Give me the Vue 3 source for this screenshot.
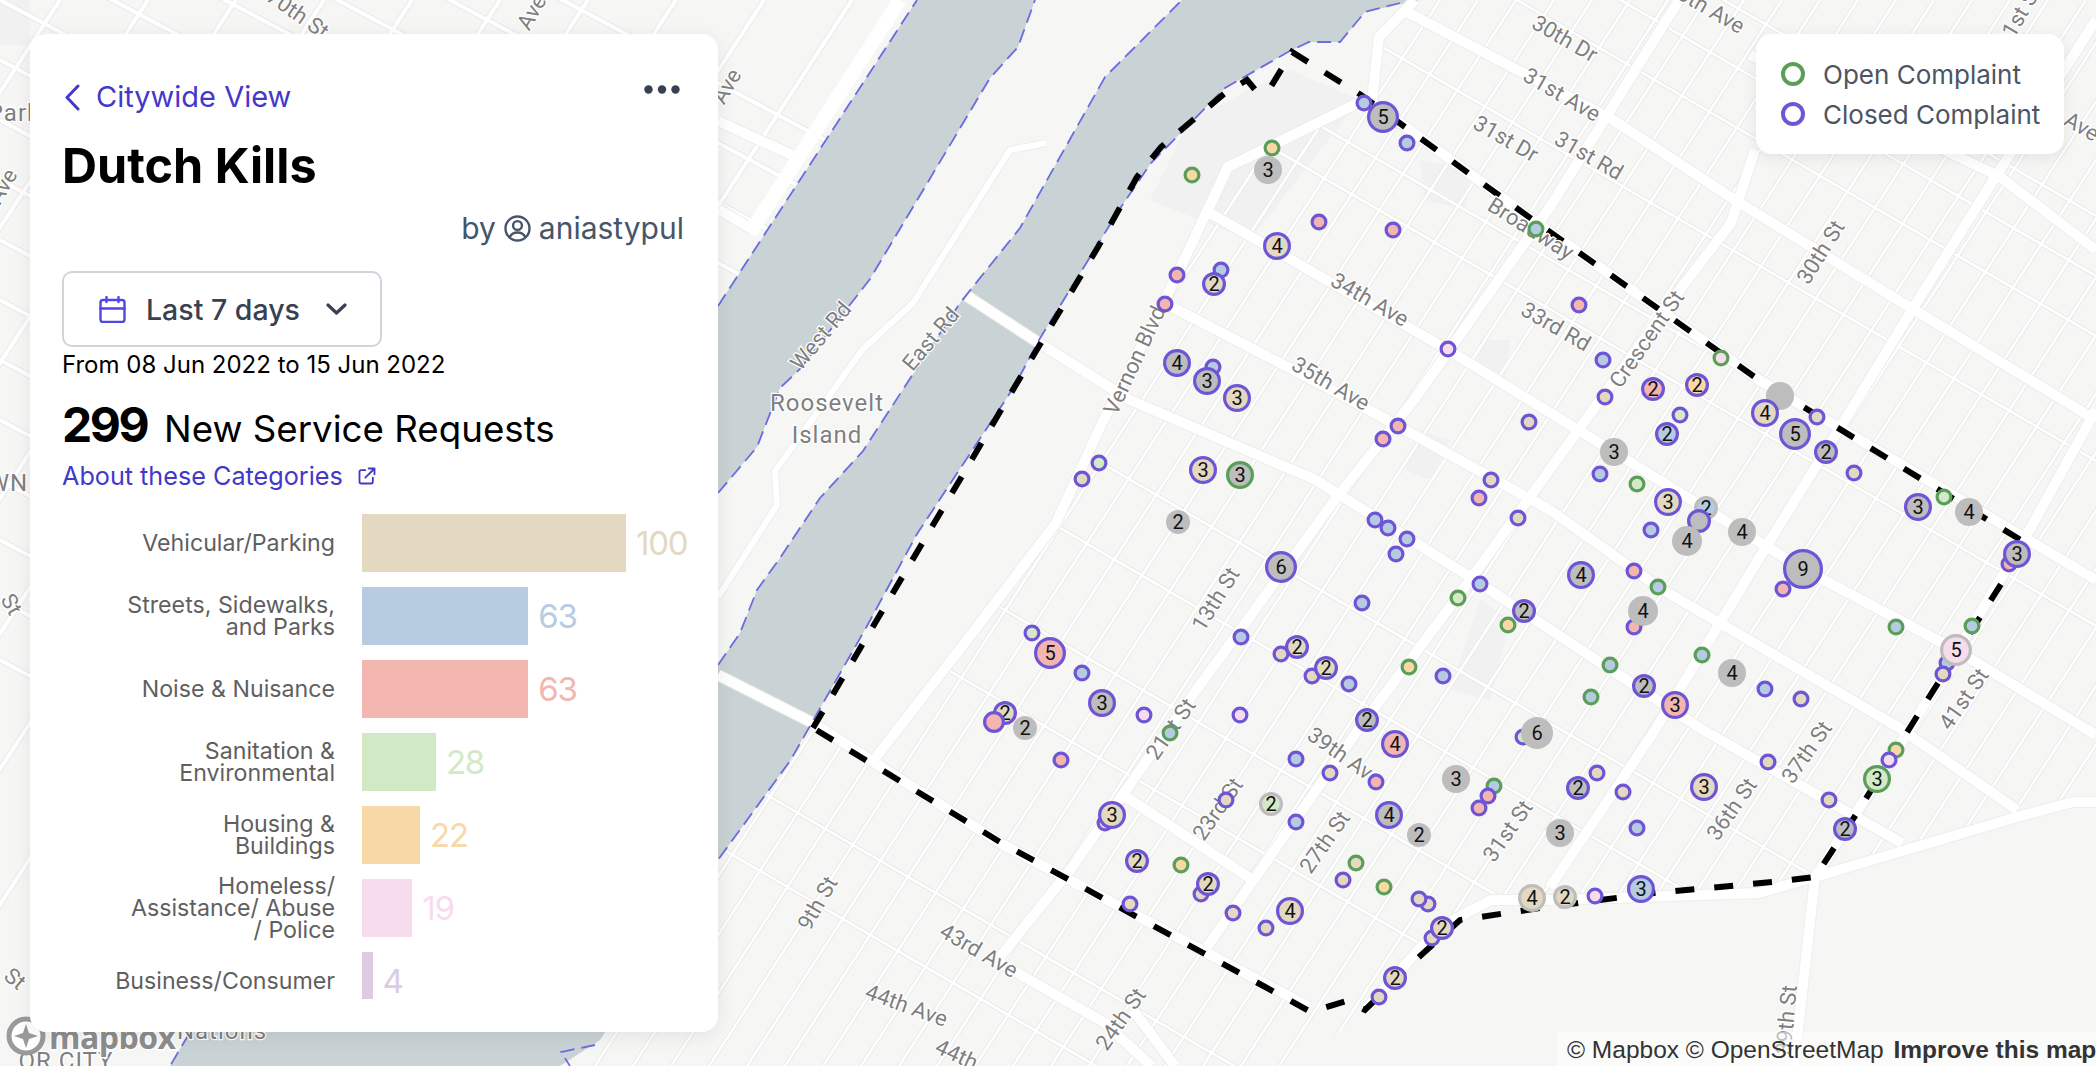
<script setup>
const FILL = { t: '#e3d9c1', b: '#b5cbe1', r: '#f3b5b0', g: '#d3e9c7', o: '#f9d7a7', p: '#f6dced', k: '#bdbdbd' };
const RING = { P: '#6e55d6', G: '#5b9e59', K: '#bdbdbd' };

const bars = [
  { label: 'Vehicular/Parking', value: 100, color: '#e3d9c1' },
  { label: 'Streets, Sidewalks,\nand Parks', value: 63, color: '#b7cce0' },
  { label: 'Noise & Nuisance', value: 63, color: '#f3b6b1' },
  { label: 'Sanitation &\nEnvironmental', value: 28, color: '#d2e9c6' },
  { label: 'Housing &\nBuildings', value: 22, color: '#f9d8a8' },
  { label: 'Homeless/\nAssistance/ Abuse\n/ Police', value: 19, color: '#f6dcec' },
  { label: 'Business/Consumer', value: 4, color: '#dcccE2' },
];

// x, y, outer radius, fill, ring, count
const markers = [
  [1364, 103, 8.5, 'b', 'P'], [1383, 117, 16, 'k', 'P', 5], [1407, 143, 8.5, 'b', 'P'], [1272, 148, 8.5, 'o', 'G'],
  [1268, 170, 14, 'k', '', 3], [1192, 175, 8.5, 'o', 'G'], [1319, 222, 8.5, 'r', 'P'], [1393, 230, 8.5, 'r', 'P'],
  [1277, 246, 14, 't', 'P', 4], [1536, 229, 8.5, 'b', 'G'], [1177, 275, 8.5, 'r', 'P'], [1221, 270, 8.5, 'b', 'P'],
  [1214, 284, 12, 't', 'P', 2], [1165, 304, 8.5, 'r', 'P'], [1448, 349, 8.5, 'p', 'P'], [1177, 363, 14, 'k', 'P', 4],
  [1213, 367, 8.5, 'b', 'P'], [1207, 381, 14, 'k', 'P', 3], [1237, 398, 14, 't', 'P', 3],
  [1579, 305, 8.5, 'r', 'P'], [1603, 360, 8.5, 'b', 'P'], [1721, 358, 8.5, 'p', 'G'], [1653, 389, 12, 'r', 'P', 2],
  [1697, 385, 12, 'o', 'P', 2], [1605, 397, 8.5, 't', 'P'], [1780, 396, 14, 'k', ''],
  [1398, 426, 8.5, 'r', 'P'], [1383, 439, 8.5, 'r', 'P'], [1529, 422, 8.5, 't', 'P'], [1491, 480, 8.5, 't', 'P'],
  [1479, 498, 8.5, 'r', 'P'], [1518, 518, 8.5, 't', 'P'], [1099, 463, 8.5, 'g', 'P'], [1082, 479, 8.5, 't', 'P'],
  [1203, 470, 14, 't', 'P', 3], [1240, 475, 14, 'k', 'G', 3], [1178, 522, 12, 'k', '', 2], [1375, 520, 8.5, 'b', 'P'],
  [1388, 528, 8.5, 'b', 'P'], [1407, 539, 8.5, 'b', 'P'], [1396, 554, 8.5, 'b', 'P'], [1281, 567, 16, 'k', 'P', 6],
  [1362, 603, 8.5, 'b', 'P'], [1480, 584, 8.5, 'b', 'P'], [1458, 598, 8.5, 'g', 'G'], [1508, 625, 8.5, 'o', 'G'],
  [1524, 611, 12, 'k', 'P', 2], [1241, 637, 8.5, 'b', 'P'], [1032, 633, 8.5, 'g', 'P'], [1050, 653, 16, 'r', 'P', 5],
  [1082, 673, 8.5, 'b', 'P'], [1281, 654, 8.5, 't', 'P'], [1297, 647, 12, 't', 'P', 2], [1312, 676, 8.5, 't', 'P'],
  [1326, 668, 12, 't', 'P', 2], [1349, 684, 8.5, 'b', 'P'], [1409, 667, 8.5, 'o', 'G'], [1443, 676, 8.5, 'b', 'P'],
  [1102, 703, 14, 'k', 'P', 3], [1144, 715, 8.5, 'p', 'P'], [1240, 715, 8.5, 'p', 'P'], [1367, 720, 12, 'k', 'P', 2],
  [1005, 713, 12, 't', 'P', 2], [994, 722, 11, 'r', 'P'], [1025, 728, 12, 'k', '', 2],
  [1680, 415, 8.5, 'g', 'P'], [1667, 434, 12, 'b', 'P', 2], [1614, 452, 14, 'k', '', 3], [1600, 474, 8.5, 'b', 'P'],
  [1637, 484, 8.5, 'g', 'G'], [1668, 502, 14, 't', 'P', 3], [1706, 508, 12, 'b', 'K', 2], [1699, 521, 12, 'k', 'P'],
  [1651, 530, 8.5, 'b', 'P'], [1687, 541, 15, 'k', '', 4], [1742, 532, 14, 'k', '', 4], [1765, 413, 14, 't', 'P', 4],
  [1817, 417, 8.5, 't', 'P'], [1795, 434, 16, 'k', 'P', 5], [1826, 452, 12, 'k', 'P', 2], [1854, 473, 8.5, 't', 'P'],
  [1918, 507, 14, 'k', 'P', 3], [1944, 497, 8.5, 'g', 'G'], [1969, 512, 14, 'k', '', 4], [2009, 564, 8.5, 'r', 'P'],
  [2017, 554, 14, 'k', 'P', 3], [1783, 589, 8.5, 'r', 'P'], [1803, 569, 20, 'k', 'P', 9], [1581, 575, 14, 'k', 'P', 4],
  [1634, 571, 8.5, 'r', 'P'], [1658, 587, 8.5, 'b', 'G'], [1634, 627, 8.5, 'r', 'P'], [1643, 611, 15, 'k', '', 4],
  [1896, 627, 8.5, 'b', 'G'], [1972, 626, 8.5, 'b', 'G'], [1947, 663, 8.5, 'b', 'P'], [1943, 674, 8.5, 't', 'P'],
  [1956, 650, 16, 'p', 'K', 5], [1702, 655, 8.5, 'b', 'G'], [1610, 665, 8.5, 'b', 'G'], [1644, 686, 12, 'k', 'P', 2],
  [1675, 705, 14, 'r', 'P', 3], [1591, 697, 8.5, 'b', 'G'], [1732, 673, 14, 'k', '', 4], [1765, 689, 8.5, 'b', 'P'],
  [1801, 699, 8.5, 't', 'P'],
  [1061, 760, 8.5, 'r', 'P'], [1170, 733, 8.5, 'b', 'G'], [1296, 759, 8.5, 'b', 'P'], [1330, 773, 8.5, 't', 'P'],
  [1395, 744, 14, 'r', 'P', 4], [1376, 782, 8.5, 'r', 'P'], [1456, 779, 14, 'k', '', 3], [1494, 786, 8.5, 'b', 'G'],
  [1488, 796, 8.5, 'r', 'P'], [1479, 808, 8.5, 'r', 'P'], [1523, 737, 8.5, 'g', 'P'], [1537, 733, 16, 'k', '', 6],
  [1226, 800, 8.5, 't', 'P'], [1271, 804, 12, 'g', 'K', 2], [1296, 822, 8.5, 'b', 'P'], [1105, 823, 8.5, 't', 'P'],
  [1112, 815, 14, 't', 'P', 3], [1389, 815, 14, 'k', 'P', 4], [1419, 835, 12, 'k', '', 2], [1137, 861, 12, 't', 'P', 2],
  [1181, 865, 8.5, 'o', 'G'], [1201, 894, 8.5, 't', 'P'], [1208, 884, 12, 't', 'P', 2], [1356, 863, 8.5, 't', 'G'],
  [1343, 880, 8.5, 't', 'P'], [1384, 887, 8.5, 'o', 'G'], [1428, 904, 8.5, 't', 'P'], [1419, 899, 8.5, 't', 'P'],
  [1432, 938, 8.5, 't', 'P'], [1442, 928, 12, 't', 'P', 2], [1130, 904, 8.5, 't', 'P'], [1233, 913, 8.5, 't', 'P'],
  [1290, 911, 14, 't', 'P', 4], [1266, 928, 8.5, 't', 'P'], [1395, 978, 12, 't', 'P', 2], [1379, 997, 8.5, 't', 'P'],
  [1532, 898, 14, 't', 'K', 4],
  [1597, 773, 8.5, 't', 'P'], [1578, 788, 12, 'k', 'P', 2], [1623, 792, 8.5, 't', 'P'], [1704, 787, 14, 't', 'P', 3],
  [1560, 833, 14, 'k', '', 3], [1637, 828, 8.5, 'b', 'P'], [1768, 762, 8.5, 't', 'P'], [1829, 800, 8.5, 't', 'P'],
  [1845, 829, 12, 'k', 'P', 2], [1896, 750, 8.5, 'o', 'G'], [1889, 760, 8.5, 'p', 'P'], [1877, 779, 14, 'g', 'G', 3],
  [1565, 897, 12, 't', 'K', 2], [1595, 896, 8.5, 'p', 'P'], [1641, 889, 14, 'b', 'P', 3],
].map(([x, y, r, f, s, n], i) => ({
  id: i,
  x,
  y,
  r: s ? r - 1.6 : r,
  fill: FILL[f],
  ring: s ? RING[s] : 'none',
  n,
}));

// name, x, y, rotation
const labels = [
  ['70th St', 297, 15, 35], ['Ave', 533, 13, -60], ['Ave', 728, 87, -60], ['Ave', 4, 187, -60],
  ['West Rd', 822, 337, -50], ['East Rd', 932, 340, -50], ['Vernon Blvd', 1136, 361, -65],
  ['Broadway', 1530, 230, 32], ['30th Dr', 1564, 40, 30], ['31st Ave', 1561, 96, 30],
  ['31st Dr', 1505, 140, 30], ['31st Rd', 1588, 157, 30], ['33rd Rd', 1555, 328, 30],
  ['Crescent St', 1648, 340, -55], ['34th Ave', 1369, 301, 30], ['35th Ave', 1330, 385, 30],
  ['30th St', 1822, 253, -58], ['30th Ave', 1705, 8, 30], ['31st St', 2020, 17, -60], ['Ave', 2081, 128, 30],
  ['13th St', 1217, 600, -58], ['21st St', 1172, 730, -55], ['23rd St', 1219, 810, -55],
  ['27th St', 1326, 843, -55], ['39th Ave', 1344, 758, 35], ['31st St', 1509, 832, -55],
  ['36th St', 1733, 810, -55], ['37th St', 1808, 753, -55], ['41st St', 1965, 700, -55],
  ['9th St', 819, 904, -60], ['43rd Ave', 978, 952, 30], ['44th Ave', 906, 1007, 20],
  ['24th St', 1122, 1020, -55], ['44th', 956, 1056, 25], ['39th St', 1788, 1020, -85],
  ['St', 10, 605, 60], ['St', 14, 980, 40],
];

const westChannel = '718,306 917,0 1035,0 1018,47 990,78 870,279 800,369 780,388 757,447 718,493 700,493 700,306';
const eastChannel =
  '718,665 740,633 757,590 780,558 820,498 863,451 913,374 960,303 1020,228 1105,77 1182,0 1420,0 1365,12 1340,42 1309,42 1288,52 1225,88 1151,163 1119,210 1039,340 1014,387 917,534 867,626 790,761 718,860 600,1040 560,1066 170,1066 189,1034 718,665';

const queens =
  '1415,0 1379,37 1372,100 1358,103 1228,167 1165,300 1102,423 1056,523 967,640 873,761 813,723 790,761 718,860 600,1040 560,1066 1300,1066 1365,1010 1421,947 1453,920 1491,900 1550,903 1759,893 1815,877 2017,817 2096,802 2096,0';
const manhattan = '0,0 917,0 718,306 0,1000';

const avenues = [-1000, -940, -880, -755, -640, -590, -176, -87, 27, 120, 350, 430].map((c) => `0,${c} 2096,${c + 1216}`);
const manhattanAvenues = [-300, -240, -180, -120, -60, 0, 60, 120, 180, 240, 300, 360, 420, 480, 540, 600, 660].map(
  (c) => `0,${c} 900,${c + 480}`,
);
const streets = [];
for (let c = 300; c < 3000; c += 38) streets.push(`${c},0 ${c - 693},1066`);
const manhattanStreets = [];
for (let c = 60; c < 1100; c += 88) manhattanStreets.push(`${c},0 ${c - 693},1066`);

const majors = [
  '1210,213 1448,350 1614,452 1803,569 1956,650 2096,735',
  '1172,307 1351,400 1550,510 1658,587 1898,727 2017,810',
  '967,296 1039,343 1130,400 1316,480 1470,577 1703,730 1902,843',
  '718,675 813,723 1000,843 1309,1007',
  '1126,797 1253,880',
  '1403,10 1613,120 1735,200 1898,300 2096,420',
  '1750,55 2000,177 2096,250',
  '1365,97 1533,220 1759,380 2096,580',
  '1679,0 1550,207 1414,400 1337,497 1182,710 1070,870 1000,957',
  '1358,103 1228,167 1165,300 1102,423 1056,523 967,640 873,761',
  '1372,100 1379,37 1415,0',
  '1755,150 1731,223 1682,287 1600,400 1470,580 1358,730 1207,947',
  '2096,20 1989,187 1912,310 1857,400 1766,547 1655,730 1550,887',
  '2096,410 2020,547 1909,730 1815,877 1794,1066',
  '1365,1010 1421,947 1453,920 1491,900 1550,900 1759,893 1815,877 2017,817 2073,802 2096,802',
  '1133,1010 1175,1066',
  '1000,963 1105,1023 1151,1066',
  '718,121 792,155',
  '718,209 750,228',
];
const islandRoad = '718,597 777,505 775,471 863,349 913,303 1010,150 1046,143';
const driveRoad = '900,0 750,233';

const shoreLines = [
  '718,306 917,0',
  '718,493 757,447 780,388 800,369 870,279 990,78 1018,47 1035,0',
  '718,665 740,633 757,590 780,558 820,498 863,451 913,374 960,303 1020,228 1105,77 1182,0',
  '1400,3 1365,12 1340,42 1309,42 1288,52 1225,88 1151,163 1119,210 1039,340 1014,387 917,534 867,626 790,761 718,860',
  '189,1034 170,1066',
  '595,1045 561,1052 570,1066',
];

const boundary =
  '813,728 1017,383 1098,247 1137,177 1161,147 1225,93 1247,80 1257,92 1270,88 1292,52 1361,95 1533,220 1759,380 1825,420 1996,525 2029,545 2005,578 1919,713 1857,813 1815,877 1773,882 1654,893 1547,907 1460,920 1418,958 1365,1010 1346,1001 1311,1012 1000,842 813,728';

const blocks = [
  '0,0 30,0 30,45 0,45',
  '1190,120 1290,70 1360,100 1250,240 1150,200',
  '1420,160 1470,170 1465,210 1425,200',
  '1480,340 1510,340 1505,380 1475,375',
  '1420,430 1450,440 1430,480 1405,470',
  '1450,690 1480,600 1510,620 1490,700',
];
</script>

<template>
  <div class="map">
    <svg class="canvas" width="2096" height="1066" viewBox="0 0 2096 1066">
      <defs>
        <clipPath id="queens"><polygon :points="queens" /></clipPath>
        <clipPath id="manhattan"><polygon :points="manhattan" /></clipPath>
      </defs>
      <polygon v-for="b in blocks" :key="b" :points="b" fill="#f0f1f0" />
      <g fill="none" clip-path="url(#queens)">
        <polyline v-for="l in [...avenues, ...streets]" :key="l" :points="l" stroke="#e9ebe9" stroke-width="4.5" />
        <polyline v-for="l in [...avenues, ...streets]" :key="l" :points="l" stroke="#fff" stroke-width="2.5" />
      </g>
      <g fill="none" clip-path="url(#manhattan)">
        <polyline v-for="l in [...manhattanAvenues, ...manhattanStreets]" :key="l" :points="l" stroke="#e9ebe9" stroke-width="6" />
        <polyline v-for="l in [...manhattanAvenues, ...manhattanStreets]" :key="l" :points="l" stroke="#fff" stroke-width="4" />
      </g>
      <polygon :points="westChannel" fill="#c9d2d4" />
      <polygon :points="eastChannel" fill="#c9d2d4" />
      <g fill="none" stroke-linejoin="round">
        <polyline v-for="m in majors" :key="m" :points="m" stroke="#ecedec" stroke-width="12" />
        <polyline v-for="m in majors" :key="m" :points="m" stroke="#fff" stroke-width="10" />
        <polyline :points="islandRoad" stroke="#ecedec" stroke-width="8" />
        <polyline :points="islandRoad" stroke="#fff" stroke-width="6" />
        <polyline :points="driveRoad" stroke="#fff" stroke-width="14" />
      </g>
      <g fill="none" stroke="#6c6be0" stroke-width="1.8" stroke-dasharray="14 7">
        <polyline v-for="s in shoreLines" :key="s" :points="s" />
      </g>
      <polyline :points="boundary" fill="none" stroke="#000" stroke-width="6" stroke-dasharray="19 20" />

      <g class="road-labels">
        <text
          v-for="l in labels"
          :key="l[0] + l[1]"
          :transform="`translate(${l[1]} ${l[2]}) rotate(${l[3]})`"
          text-anchor="middle"
          dominant-baseline="middle"
        >{{ l[0] }}</text>
        <text class="place" x="827" y="405" text-anchor="middle" dominant-baseline="middle">Roosevelt</text>
        <text class="place" x="827" y="437" text-anchor="middle" dominant-baseline="middle">Island</text>
        <text class="place" x="14" y="115" text-anchor="middle" dominant-baseline="middle">Park</text>
        <text class="place" x="8" y="485" text-anchor="middle" dominant-baseline="middle">WN</text>
        <text class="place" x="66" y="1063" text-anchor="middle" dominant-baseline="middle">OR CITY</text>
        <text class="place" x="222" y="1033" text-anchor="middle" dominant-baseline="middle">Nations</text>
      </g>

      <g v-for="m in markers" :key="m.id">
        <circle :cx="m.x" :cy="m.y" :r="m.r" :fill="m.fill" :stroke="m.ring" stroke-width="3.2" />
        <text v-if="m.n" class="count" :x="m.x" :y="m.y + 7">{{ m.n }}</text>
      </g>
    </svg>

    <div class="logo">
      <svg width="44" height="44" viewBox="0 0 44 44">
        <circle cx="22" cy="22" r="17" fill="#fff" stroke="#9a9a9a" stroke-width="5" />
        <path d="M22 10 l3 9 9 3 -9 3 -3 9 -3 -9 -9 -3 9 -3z" fill="#9a9a9a" />
      </svg>
      <span>mapbox</span>
    </div>

    <section class="panel">
      <header class="top">
        <a class="back">
          <svg width="16" height="27" viewBox="0 0 16 27">
            <path d="M14 2 3 13.500 14 25" fill="none" stroke="#4338ca" stroke-width="3" stroke-linecap="round" stroke-linejoin="round" />
          </svg>
          Citywide View
        </a>
        <svg class="more" width="36" height="9" viewBox="0 0 36 9">
          <circle cx="4.500" cy="4.500" r="4.200" /><circle cx="18" cy="4.500" r="4.200" /><circle cx="31.500" cy="4.500" r="4.200" />
        </svg>
      </header>
      <h1>Dutch Kills</h1>
      <p class="by">
        by
        <svg class="avatar" width="27" height="27" viewBox="0 0 27 27" fill="none" stroke="#475569" stroke-width="2.400">
          <circle cx="13.500" cy="13.500" r="12" />
          <circle cx="13.500" cy="10.500" r="4.400" />
          <path d="M5.500 22.500c1.500-3.500 4.500-5 8-5s6.500 1.500 8 5" />
        </svg>
        aniastypul
      </p>
      <button class="range">
        <svg width="27" height="27" viewBox="0 0 27 27" fill="none" stroke="#5046e5" stroke-width="2.400" stroke-linecap="round">
          <rect x="1.500" y="4" width="24" height="22" rx="2.500" />
          <path d="M7.500 1v5M19.500 1v5M1.500 12.500h24" />
        </svg>
        <span>Last 7 days</span>
        <svg width="21" height="12" viewBox="0 0 21 12">
          <path d="M2 2l8.500 8L19 2" fill="none" stroke="#374151" stroke-width="3.200" stroke-linecap="round" stroke-linejoin="round" />
        </svg>
      </button>
      <p class="dates">From 08 Jun 2022 to 15 Jun 2022</p>
      <div class="total"><strong>299</strong><span>New Service Requests</span></div>
      <a class="about">
        About these Categories
        <svg width="20" height="20" viewBox="0 0 24 24" fill="none" stroke="#4338ca" stroke-width="2.200" stroke-linecap="round" stroke-linejoin="round">
          <path d="M10 5H5a2 2 0 0 0-2 2v12a2 2 0 0 0 2 2h12a2 2 0 0 0 2-2v-5M14 3h7m0 0v7m0-7L10 14" />
        </svg>
      </a>
      <div class="chart">
        <div v-for="b in bars" :key="b.label" class="row">
          <div class="name">{{ b.label }}</div>
          <div class="bar" :style="{ width: b.value * 2.64 + 'px', background: b.color }"></div>
          <div class="value" :style="{ color: b.color }">{{ b.value }}</div>
        </div>
      </div>
    </section>

    <aside class="legend">
      <div class="item"><i class="open"></i>Open Complaint</div>
      <div class="item"><i class="closed"></i>Closed Complaint</div>
    </aside>

    <div class="attrib">© Mapbox © OpenStreetMap <b>Improve this map</b></div>
  </div>
</template>

<style>
html,
body {
  margin: 0;
  background: #f5f5f4;
}
</style>

<style scoped>
.map {
  position: relative;
  width: 2096px;
  height: 1066px;
  overflow: hidden;
  background: #f6f6f5;
  font-family: Inter, "Liberation Sans", sans-serif;
}
.canvas {
  position: absolute;
  left: 0;
  top: 0;
}
.road-labels text {
  font-family: Roboto, sans-serif;
  font-size: 22px;
  fill: #7f7f7f;
  stroke: #fff;
  stroke-width: 2.500px;
  paint-order: stroke;
}
.road-labels .place {
  font-size: 24px;
  letter-spacing: 1px;
}
.count {
  font-family: Roboto, sans-serif;
  font-size: 20px;
  text-anchor: middle;
  fill: #111;
}
.panel {
  position: absolute;
  left: 30px;
  top: 34px;
  width: 688px;
  height: 998px;
  box-sizing: border-box;
  padding: 45px 34px 0 32px;
  background: #fff;
  border-radius: 16px;
  box-shadow: 0 4px 20px rgba(0, 0, 0, 0.08);
}
.top {
  display: flex;
  justify-content: space-between;
  align-items: flex-start;
  padding-right: 4px;
}
.back {
  display: flex;
  align-items: center;
  gap: 16px;
  padding-left: 2px;
  font-size: 29px;
  line-height: 36px;
  color: #4338ca;
}
.more {
  fill: #374151;
  margin-top: 6px;
}
h1 {
  margin: 16px 0 0;
  font-size: 48.500px;
  line-height: 70px;
  font-weight: 700;
  color: #000;
}
.by {
  display: flex;
  align-items: center;
  justify-content: flex-end;
  gap: 8px;
  margin: 9px 0 0;
  font-size: 30px;
  line-height: 36px;
  color: #475569;
}
.range {
  display: flex;
  align-items: center;
  box-sizing: border-box;
  width: 320px;
  height: 76px;
  margin-top: 25px;
  padding: 0 33px 0 35px;
  background: #fff;
  border: 2.500px solid #d1d5db;
  border-radius: 10px;
  font: 500 28.500px Inter, sans-serif;
  color: #374151;
}
.range span {
  flex: 1;
  text-align: left;
  margin-left: 20px;
}
.dates {
  margin: 2px 0 0;
  font-size: 24px;
  line-height: 32px;
  color: #000;
}
.total {
  display: flex;
  align-items: baseline;
  gap: 17px;
  margin-top: 12px;
  color: #000;
}
.total strong {
  font-size: 48px;
  line-height: 64px;
  font-weight: 700;
  letter-spacing: -2.500px;
}
.total span {
  font-size: 36.700px;
}
.about {
  display: flex;
  align-items: center;
  gap: 14px;
  margin-top: 2px;
  font-size: 25.200px;
  line-height: 34px;
  color: #4338ca;
}
.chart {
  display: flex;
  flex-direction: column;
  gap: 15px;
  margin-top: 21px;
}
.row {
  display: flex;
  align-items: center;
  height: 58px;
}
.row:last-child .bar {
  align-self: flex-start;
  height: 47px;
}
.name {
  flex: none;
  width: 273px;
  margin-right: 27px;
  text-align: right;
  white-space: pre-line;
  font-size: 23.200px;
  line-height: 22px;
  color: #5f5f5f;
}
.bar {
  flex: none;
  align-self: stretch;
}
.value {
  margin-left: 10px;
  font-size: 33px;
  letter-spacing: -1.200px;
}
.legend {
  position: absolute;
  left: 1756px;
  top: 34px;
  width: 308px;
  height: 120px;
  box-sizing: border-box;
  padding: 20px 0 0 25px;
  background: #fff;
  border-radius: 16px;
  box-shadow: 0 4px 16px rgba(0, 0, 0, 0.08);
}
.item {
  display: flex;
  align-items: center;
  gap: 18px;
  height: 40px;
  font-size: 26px;
  color: #4b5563;
}
.item i {
  width: 24px;
  height: 24px;
  box-sizing: border-box;
  border-radius: 50%;
  border: 4.500px solid;
}
.open {
  border-color: #5b9e59 !important;
}
.closed {
  border-color: #6e55d6 !important;
}
.logo {
  position: absolute;
  left: 4px;
  top: 1014px;
  display: flex;
  align-items: center;
  gap: 1px;
}
.logo span {
  font: 700 32px "Open Sans", sans-serif;
  letter-spacing: -0.500px;
  color: #8d8d8d;
  -webkit-text-stroke: 3px #fff;
  paint-order: stroke fill;
}
.attrib {
  position: absolute;
  right: 0;
  bottom: 0;
  width: 529px;
  height: 34px;
  padding-left: 10px;
  background: rgba(255, 255, 255, 0.5);
  font: 24.500px/36px "Liberation Sans", sans-serif;
  color: #333;
  white-space: nowrap;
}
.attrib b {
  margin-left: 3px;
}
</style>
